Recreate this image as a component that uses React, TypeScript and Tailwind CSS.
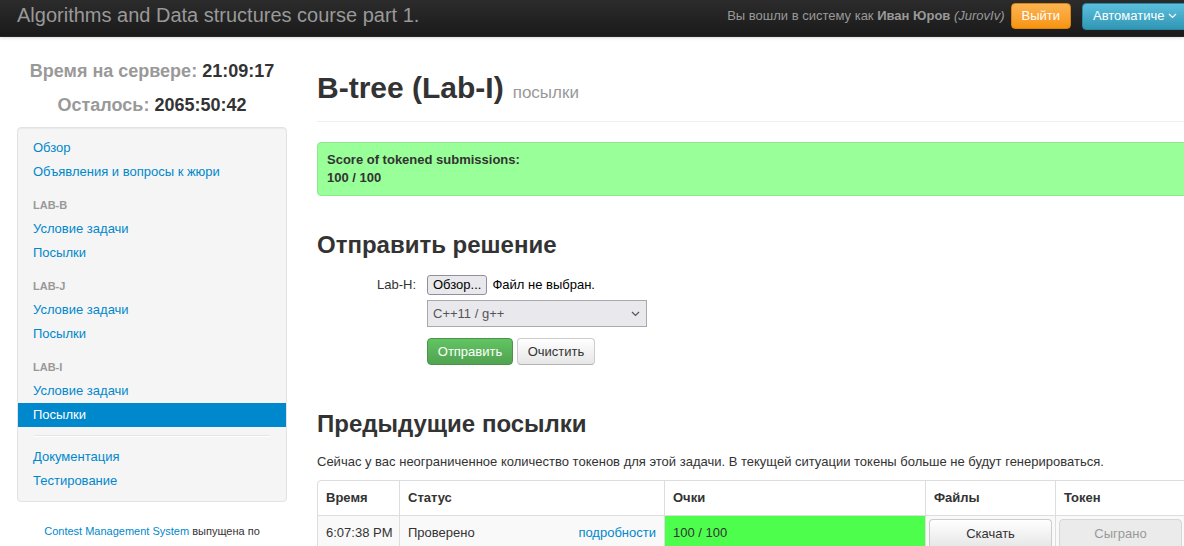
import React from "react";

const font = { fontFamily: '"Liberation Sans", Arial, sans-serif' };

function NavItem({ children, active }: { children: React.ReactNode; active?: boolean }) {
  return (
    <div
      className={
        "px-[15px] py-[3px] text-[13px] leading-[18px] " +
        (active ? "bg-[#0088cc] text-white" : "text-[#0088cc]")
      }
    >
      {children}
    </div>
  );
}

function NavHeader({ children }: { children: React.ReactNode }) {
  return (
    <div className="mt-[9px] px-[15px] py-[3px] text-[11px] leading-[18px] font-bold uppercase text-[#999999]">
      {children}
    </div>
  );
}

export default function App() {
  return (
    <div className="w-[1184px] h-[546px] overflow-hidden bg-white text-[#333333]" style={font}>
      {/* Navbar */}
      <div className="h-[37px] flex items-center bg-gradient-to-b from-[#2c2c2c] to-[#1a1a1a] border-b border-[#252525] shadow-[0_1px_3px_rgba(0,0,0,0.15)] whitespace-nowrap">
        <div className="pl-[17px] text-[20px] leading-[24px] text-[#999999] -mt-[7px]">
          Algorithms and Data structures course part 1.
        </div>
        <div className="ml-auto flex items-center -mt-[4px]">
          <span className="text-[13px] text-[#999999]">
            Вы вошли в систему как <b>Иван Юров</b> <i>(JurovIv)</i>
          </span>
          <button className="ml-[6px] h-[26px] px-[10px] rounded-[4px] border border-[#d8830b] bg-gradient-to-b from-[#fbb450] to-[#f89406] text-white text-[13px]">
            Выйти
          </button>
          <button className="ml-[11px] mr-[-10px] h-[27px] w-[112px] pl-[10px] rounded-[4px] border border-[#2a87a3] bg-gradient-to-b from-[#5bc0de] to-[#2f96b4] text-white text-[13px] text-left flex items-center">
            Автоматиче
            <svg width="9" height="6" viewBox="0 0 9 6" className="ml-[4px]">
              <path d="M1 1l3.5 3.5L8 1" fill="none" stroke="white" strokeWidth="1.2" />
            </svg>
          </button>
        </div>
      </div>

      <div className="flex">
        {/* Sidebar */}
        <div className="ml-[17px] w-[270px] shrink-0">
          <div className="mt-[22px] text-center text-[18px] leading-[24px] font-bold whitespace-nowrap">
            <span className="text-[#999999]">Время на сервере:</span> <span className="text-[#333333]">21:09:17</span>
          </div>
          <div className="mt-[10px] text-center text-[18px] leading-[24px] font-bold whitespace-nowrap">
            <span className="text-[#999999]">Осталось:</span> <span className="text-[#333333]">2065:50:42</span>
          </div>
          <div className="mt-[10px] rounded-[4px] border border-[#e3e3e3] bg-[#f5f5f5] py-[8px] shadow-[inset_0_1px_1px_rgba(0,0,0,0.05)]">
            <NavItem>Обзор</NavItem>
            <NavItem>Объявления и вопросы к жюри</NavItem>
            <NavHeader>Lab-B</NavHeader>
            <NavItem>Условие задачи</NavItem>
            <NavItem>Посылки</NavItem>
            <NavHeader>Lab-J</NavHeader>
            <NavItem>Условие задачи</NavItem>
            <NavItem>Посылки</NavItem>
            <NavHeader>Lab-I</NavHeader>
            <NavItem>Условие задачи</NavItem>
            <NavItem active>Посылки</NavItem>
            <div className="mx-[16px] my-[8px] h-[2px] border-t border-[#e5e5e5] border-b border-b-white" />
            <NavItem>Документация</NavItem>
            <NavItem>Тестирование</NavItem>
          </div>
          <div className="mt-[21px] text-center text-[11px] leading-[16px] whitespace-nowrap">
            <span className="text-[#0088cc]">Contest Management System</span> выпущена по
          </div>
        </div>

        {/* Main */}
        <div className="ml-[30px] w-[880px] shrink-0">
          <div className="mt-[31px] flex items-baseline pb-[13px] border-b border-[#eeeeee]">
            <span className="text-[30px] leading-[40px] font-bold text-[#333333]">B-tree (Lab-I)</span>
            <span className="ml-[9px] text-[17px] text-[#999999]">посылки</span>
          </div>

          <div className="mt-[20px] rounded-[4px] border border-[#8fe88f] bg-[#99ff99] px-[9px] py-[8px] text-[13px] leading-[18px] font-bold text-[#333333]">
            <div>Score of tokened submissions:</div>
            <div>100 / 100</div>
          </div>

          <div className="mt-[34px] text-[24px] leading-[30px] font-bold text-[#333333]">Отправить решение</div>

          <div className="mt-[15px] flex">
            <div className="w-[99px] text-right text-[13px] leading-[20px]">Lab-H:</div>
            <div className="ml-[11px] flex flex-col">
              <div className="flex items-center h-[20px]">
                <span className="h-[20px] px-[5px] rounded-[3px] border border-[#8f8f9d] bg-[#e9e9ed] text-[13px] leading-[18px] text-black">
                  Обзор...
                </span>
                <span className="ml-[5px] text-[13px] text-black">Файл не выбран.</span>
              </div>
              <div className="mt-[5px] w-[220px] h-[27px] border border-[#a9a9a9] bg-[#e9e9ed] flex items-center px-[5px] text-[13px] text-[#555555]">
                C++11 / g++
                <svg width="9" height="6" viewBox="0 0 9 6" className="ml-auto mr-[1px]">
                  <path d="M1 1l3.5 3.5L8 1" fill="none" stroke="#555" strokeWidth="1.2" />
                </svg>
              </div>
              <div className="mt-[11px] flex gap-[4px]">
                <button className="h-[27px] w-[86px] rounded-[4px] border border-[#4a944a] bg-gradient-to-b from-[#62c462] to-[#51a351] text-white text-[13px]">
                  Отправить
                </button>
                <button className="h-[27px] w-[78px] rounded-[4px] border border-[#cccccc] border-b-[#b3b3b3] bg-gradient-to-b from-white to-[#e6e6e6] text-[#333333] text-[13px]">
                  Очистить
                </button>
              </div>
            </div>
          </div>

          <div className="mt-[44px] text-[24px] leading-[30px] font-bold text-[#333333]">Предыдущие посылки</div>

          <div className="mt-[14px] text-[13px] leading-[18px] text-[#333333]">
            Сейчас у вас неограниченное количество токенов для этой задачи. В текущей ситуации токены больше не будут генерироваться.
          </div>

          <div className="mt-[9px] w-[868px] rounded-tl-[4px] border border-[#dddddd] text-[13px] whitespace-nowrap">
            <div className="flex h-[34px] items-center font-bold">
              <div className="w-[81px] shrink-0 px-[8px]">Время</div>
              <div className="w-[265px] shrink-0 h-full flex items-center px-[8px] border-l border-[#dddddd]">Статус</div>
              <div className="w-[261px] shrink-0 h-full flex items-center px-[8px] border-l border-[#dddddd]">Очки</div>
              <div className="w-[130px] shrink-0 h-full flex items-center px-[8px] border-l border-[#dddddd]">Файлы</div>
              <div className="w-[130px] shrink-0 h-full flex items-center px-[8px] border-l border-[#dddddd]">Токен</div>
            </div>
            <div className="flex h-[34px] items-stretch border-t border-[#dddddd] bg-[#f9f9f9]">
              <div className="w-[81px] shrink-0 px-[8px] flex items-center">6:07:38 PM</div>
              <div className="w-[265px] shrink-0 px-[8px] flex items-center border-l border-[#dddddd]">
                Проверено
                <span className="ml-auto text-[#0088cc]">подробности</span>
              </div>
              <div className="w-[261px] shrink-0 px-[8px] flex items-center border-l border-[#dddddd] bg-[#4dfe4d]">100 / 100</div>
              <div className="w-[130px] shrink-0 px-[3px] pt-[3px] border-l border-[#dddddd]">
                <div className="h-[30px] rounded-[4px] border border-[#cccccc] border-b-[#b3b3b3] bg-gradient-to-b from-white to-[#e6e6e6] flex items-center justify-center text-[#333333]">
                  Скачать
                </div>
              </div>
              <div className="w-[130px] shrink-0 px-[3px] pt-[3px] border-l border-[#dddddd]">
                <div className="h-[30px] rounded-[4px] border border-[#d6d6d6] bg-[#ebebeb] flex items-center justify-center text-[#999999]">
                  Сыграно
                </div>
              </div>
            </div>
          </div>
        </div>
      </div>
    </div>
  );
}
